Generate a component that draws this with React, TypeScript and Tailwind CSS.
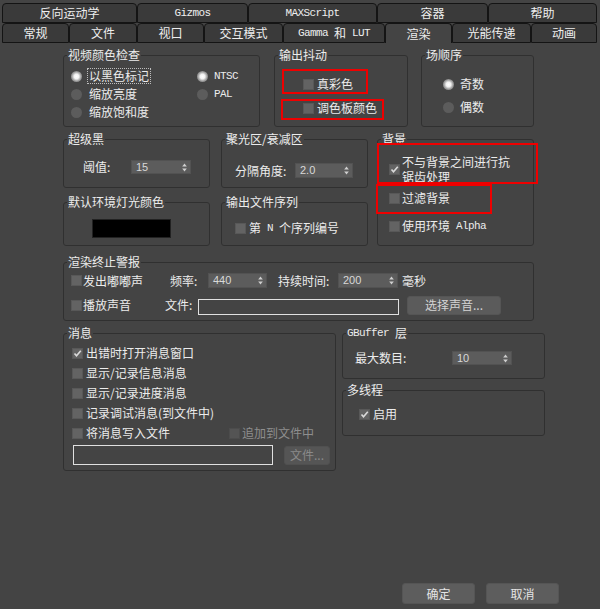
import React from "react";

const MONO = "font-[family-name:'Liberation_Mono',monospace] text-[11px] tracking-[-0.6px]";
const NUM = "font-[family-name:'Liberation_Sans',Arial,sans-serif] text-[11px]";

function Group({
  title,
  className,
  children,
}: {
  title: React.ReactNode;
  className: string;
  children?: React.ReactNode;
}) {
  return (
    <fieldset className={`border border-[#303030] rounded-[3px] shrink-0 ${className}`}>
      <legend className="ml-[3px] px-[1px] text-[12px] leading-[14px] text-[#ececec]">{title}</legend>
      {children}
    </fieldset>
  );
}

function Check({ checked = false, disabled = false }: { checked?: boolean; disabled?: boolean }) {
  return (
    <span
      className={`w-[11px] h-[11px] shrink-0 flex items-center justify-center border ${
        disabled ? "bg-[#545454] border-[#4c4c4c]" : "bg-[#636363] border-[#585858]"
      }`}
    >
      {checked && (
        <svg width="9" height="9" viewBox="0 0 9 9">
          <path d="M1.5 4.5 L3.5 6.8 L7.8 1.8" stroke="#dadada" strokeWidth="1.6" fill="none" />
        </svg>
      )}
    </span>
  );
}

function Radio({ on = false }: { on?: boolean }) {
  return on ? (
    <span className="w-[11px] h-[11px] rounded-full shrink-0 bg-[radial-gradient(circle,#ffffff_0%,#f2f2f2_30%,#9a9a9a_60%,#6a6a6a_100%)]" />
  ) : (
    <span className="w-[11px] h-[11px] rounded-full shrink-0 bg-[#5c5c5c]" />
  );
}

function Spinner({ value, className }: { value: string; className: string }) {
  return (
    <div className={`flex items-center bg-[#5c5c5c] border border-[#525252] pl-[4px] pr-[3px] shrink-0 ${className}`}>
      <span className={`${NUM} text-[#d8d8d8] leading-none flex-1`}>{value}</span>
      <svg width="5" height="9" viewBox="0 0 5 9">
        <path d="M2.5 0.5 L4.8 3.5 L0.2 3.5 Z" fill="#d0d0d0" />
        <path d="M2.5 8.5 L4.8 5.5 L0.2 5.5 Z" fill="#d0d0d0" />
      </svg>
    </div>
  );
}

function Tab({ label, className, active = false }: { label: React.ReactNode; className: string; active?: boolean }) {
  return (
    <div
      className={`h-full flex items-center justify-center rounded-t-[4px] border border-[#141414] text-[12px] text-[#eeeeee] ${
        active ? "bg-[#444444] border-b-0" : "bg-[#3a3a3a]"
      } ${className}`}
    >
      {label}
    </div>
  );
}

export default function App() {
  return (
    <div className="relative w-[600px] h-[609px] overflow-hidden bg-[#444444] text-[12px] leading-[14px] text-[#ececec] font-[family-name:'Noto_Sans_CJK_SC','Noto_Sans',sans-serif]">
      {/* Tabs row 1 */}
      <div className="flex px-[2px] pt-[3px] h-[23px]">
        <Tab label="反向运动学" className="w-[135px]" />
        <Tab label={<span className={MONO}>Gizmos</span>} className="w-[111px]" />
        <Tab label={<span className={MONO}>MAXScript</span>} className="w-[129px]" />
        <Tab label="容器" className="w-[111px]" />
        <Tab label="帮助" className="w-[109px]" />
      </div>
      {/* Tabs row 2 */}
      <div className="flex px-[2px] h-[20px]">
        <Tab label="常规" className="w-[67px]" />
        <Tab label="文件" className="w-[68px]" />
        <Tab label="视口" className="w-[67px]" />
        <Tab label="交互模式" className="w-[79px]" />
        <Tab
          label={
            <span className="flex items-center gap-[6px]">
              <span className={MONO}>Gamma</span>和<span className={MONO}>LUT</span>
            </span>
          }
          className="w-[102px]"
        />
        <Tab label="渲染" className="w-[67px]" active />
        <Tab label="光能传递" className="w-[79px]" />
        <Tab label="动画" className="w-[66px]" />
      </div>

      <div className="flex flex-col pl-[63px] pt-[5px]">
        {/* Row 1 */}
        <div className="flex items-start">
          <Group title="视频颜色检查" className="w-[197px] h-[79px]">
            <div className="flex pl-[7px] pt-[5px]">
              <div className="flex flex-col w-[126px]">
                <div className="flex items-center h-[18px]">
                  <Radio on />
                  <span className="ml-[5px] px-[1px] border border-dotted border-[#bdbdbd]">以黑色标记</span>
                </div>
                <div className="flex items-center h-[18px]">
                  <Radio />
                  <span className="ml-[5px] px-[1px] border border-transparent">缩放亮度</span>
                </div>
                <div className="flex items-center h-[18px]">
                  <Radio />
                  <span className="ml-[5px] px-[1px] border border-transparent">缩放饱和度</span>
                </div>
              </div>
              <div className="flex flex-col">
                <div className="flex items-center h-[18px]">
                  <Radio on />
                  <span className={`ml-[6px] ${MONO}`}>NTSC</span>
                </div>
                <div className="flex items-center h-[18px]">
                  <Radio />
                  <span className={`ml-[6px] ${MONO}`}>PAL</span>
                </div>
              </div>
            </div>
          </Group>

          <Group title="输出抖动" className="ml-[14px] w-[134px] h-[79px]">
            <div className="flex flex-col pl-[28px] pt-[15px]">
              <div className="flex items-center h-[14px]">
                <Check />
                <span className="ml-[3px]">真彩色</span>
              </div>
              <div className="flex items-center h-[14px] mt-[10px]">
                <Check />
                <span className="ml-[3px]">调色板颜色</span>
              </div>
            </div>
          </Group>

          <Group title="场顺序" className="ml-[13px] w-[113px] h-[79px]">
            <div className="flex flex-col pl-[21px] pt-[15px]">
              <div className="flex items-center h-[14px]">
                <Radio on />
                <span className="ml-[6px]">奇数</span>
              </div>
              <div className="flex items-center h-[14px] mt-[9px]">
                <Radio />
                <span className="ml-[6px]">偶数</span>
              </div>
            </div>
          </Group>
        </div>

        {/* Row 2 */}
        <div className="flex items-start mt-[5px]">
          <div className="flex flex-col">
            <Group title="超级黑" className="w-[147px] h-[56px]">
              <div className="flex items-center pl-[19px] pt-[14px]">
                <span className="w-[48px]">阈值:</span>
                <Spinner value="15" className="w-[60px] h-[14px]" />
              </div>
            </Group>
            <Group title="默认环境灯光颜色" className="w-[147px] h-[51px] mt-[7px]">
              <div className="pl-[28px] pt-[10px]">
                <div className="w-[79px] h-[19px] bg-black border border-[#222]" />
              </div>
            </Group>
          </div>

          <div className="flex flex-col ml-[11px]">
            <Group title="聚光区/衰减区" className="w-[147px] h-[56px]">
              <div className="flex items-center pl-[13px] pt-[17px]">
                <span className="w-[60px]">分隔角度:</span>
                <Spinner value="2.0" className="w-[58px] h-[15px]" />
              </div>
            </Group>
            <Group title="输出文件序列" className="w-[147px] h-[51px] mt-[7px]">
              <div className="flex items-center pl-[13px] pt-[12px] h-[26px]">
                <Check />
                <span className="ml-[3px] flex items-center">
                  第<span className={`mx-[6px] ${MONO}`}>N</span>个序列编号
                </span>
              </div>
            </Group>
          </div>

          <Group title="背景" className="ml-[9px] w-[157px] h-[114px]">
            <div className="flex flex-col pl-[11px] pt-[8px]">
              <div className="flex items-center">
                <Check checked />
                <div className="ml-[2px] flex flex-col">
                  <span className="leading-[15px]">不与背景之间进行抗</span>
                  <span className="leading-[15px]">锯齿处理</span>
                </div>
              </div>
              <div className="flex items-center h-[14px] mt-[7px]">
                <Check />
                <span className="ml-[2px]">过滤背景</span>
              </div>
              <div className="flex items-center h-[14px] mt-[14px]">
                <Check />
                <span className="ml-[2px] flex items-center">
                  使用环境<span className={`ml-[6px] ${MONO}`}>Alpha</span>
                </span>
              </div>
            </div>
          </Group>
        </div>

        {/* Row 3 */}
        <Group title="渲染终止警报" className="mt-[9px] w-[471px] h-[66px]">
          <div className="flex flex-col pl-[7px] pt-[4px]">
            <div className="flex items-center h-[15px]">
              <div className="flex items-center w-[99px]">
                <Check />
                <span className="ml-[1px]">发出嘟嘟声</span>
              </div>
              <span className="w-[38px]">频率:</span>
              <Spinner value="440" className="w-[59px] h-[15px]" />
              <span className="ml-[11px] w-[60px]">持续时间:</span>
              <Spinner value="200" className="w-[60px] h-[15px]" />
              <span className="ml-[4px]">毫秒</span>
            </div>
            <div className="flex items-center h-[20px] mt-[7px]">
              <div className="flex items-center w-[94px]">
                <Check />
                <span className="ml-[1px]">播放声音</span>
              </div>
              <span className="w-[33px]">文件:</span>
              <div className="w-[201px] h-[16px] mt-[3px] border border-[#e0e0e0] bg-[#444444]" />
              <div className="ml-[8px] w-[94px] h-[19px] rounded-[3px] bg-[#5b5b5b] border border-[#555] flex items-center justify-center text-[#d4d4d4]">
                选择声音...
              </div>
            </div>
          </div>
        </Group>

        {/* Row 4 */}
        <div className="flex items-start mt-[5px]">
          <Group title="消息" className="w-[273px] h-[145px]">
            <div className="flex flex-col pl-[8px] pt-[3px]">
              <div className="flex items-center h-[20px]">
                <Check checked />
                <span className="ml-[3px]">出错时打开消息窗口</span>
              </div>
              <div className="flex items-center h-[20px]">
                <Check />
                <span className="ml-[3px]">显示/记录信息消息</span>
              </div>
              <div className="flex items-center h-[20px]">
                <Check />
                <span className="ml-[3px]">显示/记录进度消息</span>
              </div>
              <div className="flex items-center h-[20px]">
                <Check />
                <span className="ml-[3px]">记录调试消息(到文件中)</span>
              </div>
              <div className="flex items-center h-[20px]">
                <div className="flex items-center w-[157px]">
                  <Check />
                  <span className="ml-[3px]">将消息写入文件</span>
                </div>
                <Check disabled />
                <span className="ml-[2px] text-[#8e8e8e]">追加到文件中</span>
              </div>
              <div className="flex items-center mt-[2px] ml-[1px]">
                <div className="w-[200px] h-[20px] border border-[#e0e0e0] bg-[#444444]" />
                <div className="ml-[11px] w-[46px] h-[19px] rounded-[3px] bg-[#555555] border border-[#505050] flex items-center justify-center text-[#8a8a8a]">
                  文件...
                </div>
              </div>
            </div>
          </Group>

          <div className="flex flex-col ml-[6px]">
            <Group
              title={
                <span className="flex items-center gap-[6px]">
                  <span className={MONO}>GBuffer</span>层
                </span>
              }
              className="w-[203px] h-[53px]"
            >
              <div className="flex items-center pl-[12px] pt-[11px]">
                <span className="w-[97px]">最大数目:</span>
                <Spinner value="10" className="w-[60px] h-[14px]" />
              </div>
            </Group>
            <Group title="多线程" className="w-[203px] h-[53px] mt-[4px]">
              <div className="flex items-center pl-[16px] pt-[10px] h-[24px]">
                <Check checked />
                <span className="ml-[3px]">启用</span>
              </div>
            </Group>
          </div>
        </div>
      </div>

      {/* Bottom buttons */}
      <div className="flex justify-end pr-[41px] mt-[112px] gap-[11px]">
        <div className="w-[73px] h-[21px] rounded-[3px] bg-[#5d5d5d] border border-[#555] flex items-center justify-center text-[#e4e4e4]">
          确定
        </div>
        <div className="w-[73px] h-[21px] rounded-[3px] bg-[#5d5d5d] border border-[#555] flex items-center justify-center text-[#e4e4e4]">
          取消
        </div>
      </div>

      {/* Red annotation boxes */}
      <div className="absolute left-[282px] top-[69px] w-[86px] h-[25px] border-2 border-[#ee0000]" />
      <div className="absolute left-[281px] top-[99px] w-[103px] h-[21px] border-2 border-[#ee0000]" />
      <div className="absolute left-[377px] top-[143px] w-[161px] h-[41px] border-2 border-[#ee0000]" />
      <div className="absolute left-[376px] top-[184px] w-[116px] h-[30px] border-2 border-[#ee0000]" />
    </div>
  );
}
